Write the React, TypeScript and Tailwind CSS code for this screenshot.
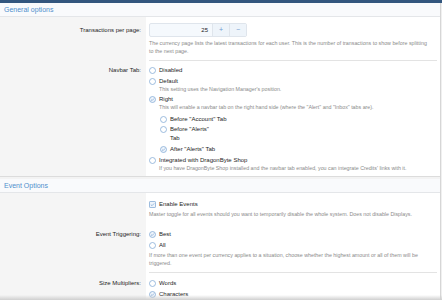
import React from "react";

const Radio = ({ checked = false }: { checked?: boolean }) => (
  <svg width="7" height="7" viewBox="0 0 7 7" className="shrink-0">
    <circle
      cx="3.5"
      cy="3.5"
      r="3"
      fill={checked ? "#eef4fb" : "#fff"}
      stroke="#86acd6"
      strokeWidth="0.8"
    />
    {checked && (
      <path d="M2 3.6L3.1 4.6L5 2.5" fill="none" stroke="#86acd6" strokeWidth="0.8" />
    )}
  </svg>
);

const Checkbox = () => (
  <svg width="7" height="7" viewBox="0 0 7 7" className="shrink-0">
    <rect x="0.5" y="0.5" width="6" height="6" rx="0.6" fill="#eef4fb" stroke="#86acd6" strokeWidth="0.8" />
    <path d="M1.8 3.6L3 4.7L5.2 2.4" fill="none" stroke="#86acd6" strokeWidth="0.8" />
  </svg>
);

const Option = ({
  label,
  checked,
  hint,
  className = "",
}: {
  label: React.ReactNode;
  checked?: boolean;
  hint?: string;
  className?: string;
}) => (
  <div className={className}>
    <div className="flex items-start gap-[3px] leading-[9px] text-[6px] text-[#1d1d1d]">
      <span className="h-[9px] flex items-center">
        <Radio checked={checked} />
      </span>
      <span>{label}</span>
    </div>
    {hint && (
      <div className="pl-[10px] text-[5.3px] leading-[7px] text-[#8a8a8a] whitespace-nowrap">{hint}</div>
    )}
  </div>
);

const SectionHeader = ({ title }: { title: string }) => (
  <div className="h-[14px] pl-[4px] bg-[#f9fafc] border-b border-[#e4e6e9] text-[7px] leading-[13px] text-[#4f8fcc]">
    {title}
  </div>
);

const Row = ({
  label,
  labelPad,
  children,
  sep = false,
}: {
  label?: string;
  labelPad: string;
  children: React.ReactNode;
  sep?: boolean;
}) => (
  <div className="flex">
    <div className={`w-[146px] shrink-0 bg-[#f5f5f5] text-right pr-[5px] text-[6px] leading-[9px] text-[#1d1d1d] ${labelPad}`}>
      {label}
    </div>
    <div className="flex-1 bg-white pl-[3px]">
      <div className={sep ? "border-b border-[#e3e3e3] mr-[3px]" : ""}>{children}</div>
    </div>
  </div>
);

export default function App() {
  return (
    <div className="w-[442px] h-[300px] overflow-hidden relative bg-[#f0f0f0] font-['Liberation_Sans',Arial,sans-serif]">
      <div className="h-[3px] bg-[#33567e]" />
      <div className="w-[441px] border-r border-[#d6d6d6]">
        <SectionHeader title="General options" />

        <Row label="Transactions per page:" labelPad="pt-[9px]" sep>
          <div className="pt-[6px] pb-[5px]">
            <div className="flex h-[14px] w-[98px] border border-[#dfe5ec] rounded-[2px] bg-[#f5f9fd] text-[6px]">
              <div className="flex-1 flex items-center justify-end pr-[4px] text-[#222]">25</div>
              <div className="w-[17px] flex items-center justify-center border-l border-[#dfe5ec] bg-[#eef4fa] text-[#6f9bd1] text-[7px]">+</div>
              <div className="w-[17px] flex items-center justify-center border-l border-[#dfe5ec] bg-[#eef4fa] text-[#6f9bd1] text-[7px]">−</div>
            </div>
            <div className="mt-[2px] text-[5.3px] leading-[8px] text-[#8a8a8a] whitespace-nowrap">
              The currency page lists the latest transactions for each user. This is the number of transactions to show before splitting
              <br />
              to the next page.
            </div>
          </div>
        </Row>

        <Row label="Navbar Tab:" labelPad="pt-[5px]">
          <div className="pt-[5px] pb-[4px]">
            <Option label="Disabled" />
            <Option className="mt-[2px]" label="Default" hint="This setting uses the Navigation Manager's position." />
            <Option
              className="mt-[2px]"
              label="Right"
              checked
              hint={'This will enable a navbar tab on the right hand side (where the "Alert" and "Inbox" tabs are).'}
            />
            <div className="mt-[4px] pl-[11px]">
              <Option label={'Before "Account" Tab'} />
              <Option
                className="mt-[1px]"
                label={
                  <>
                    Before "Alerts"
                    <br />
                    Tab
                  </>
                }
              />
              <Option className="mt-[2px]" label={'After "Alerts" Tab'} checked />
            </div>
            <Option
              className="mt-[2px]"
              label="Integrated with DragonByte Shop"
              hint="If you have DragonByte Shop installed and the navbar tab enabled, you can integrate Credits' links with it."
            />
          </div>
        </Row>

        <div className="h-[3px] border-t border-[#dcdcdc] bg-[#f3f3f3]" />
        <SectionHeader title="Event Options" />

        <Row labelPad="">
          <div className="pt-[7px]">
            <div className="flex items-start gap-[3px] leading-[9px] text-[6px] text-[#1d1d1d]">
              <span className="h-[9px] flex items-center">
                <Checkbox />
              </span>
              <span>Enable Events</span>
            </div>
            <div className="mt-[2px] text-[5.3px] leading-[7px] text-[#8a8a8a] whitespace-nowrap">
              Master toggle for all events should you want to temporarily disable the whole system. Does not disable Displays.
            </div>
          </div>
        </Row>

        <Row label="Event Triggering:" labelPad="pt-[12px]" sep>
          <div className="pt-[12px] pb-[5px]">
            <Option label="Best" checked />
            <Option className="mt-[2px]" label="All" />
            <div className="mt-[1px] text-[5.3px] leading-[8px] text-[#8a8a8a] whitespace-nowrap">
              If more than one event per currency applies to a situation, choose whether the highest amount or all of them will be
              <br />
              triggered.
            </div>
          </div>
        </Row>

        <Row label="Size Multipliers:" labelPad="pt-[6px]">
          <div className="pt-[6px] pb-[10px]">
            <Option label="Words" />
            <Option className="mt-[2px]" label="Characters" checked />
          </div>
        </Row>
      </div>
      <div className="absolute left-0 right-0 bottom-0 h-[5px] bg-linear-to-t from-[#cfcfcf] to-transparent" />
    </div>
  );
}
